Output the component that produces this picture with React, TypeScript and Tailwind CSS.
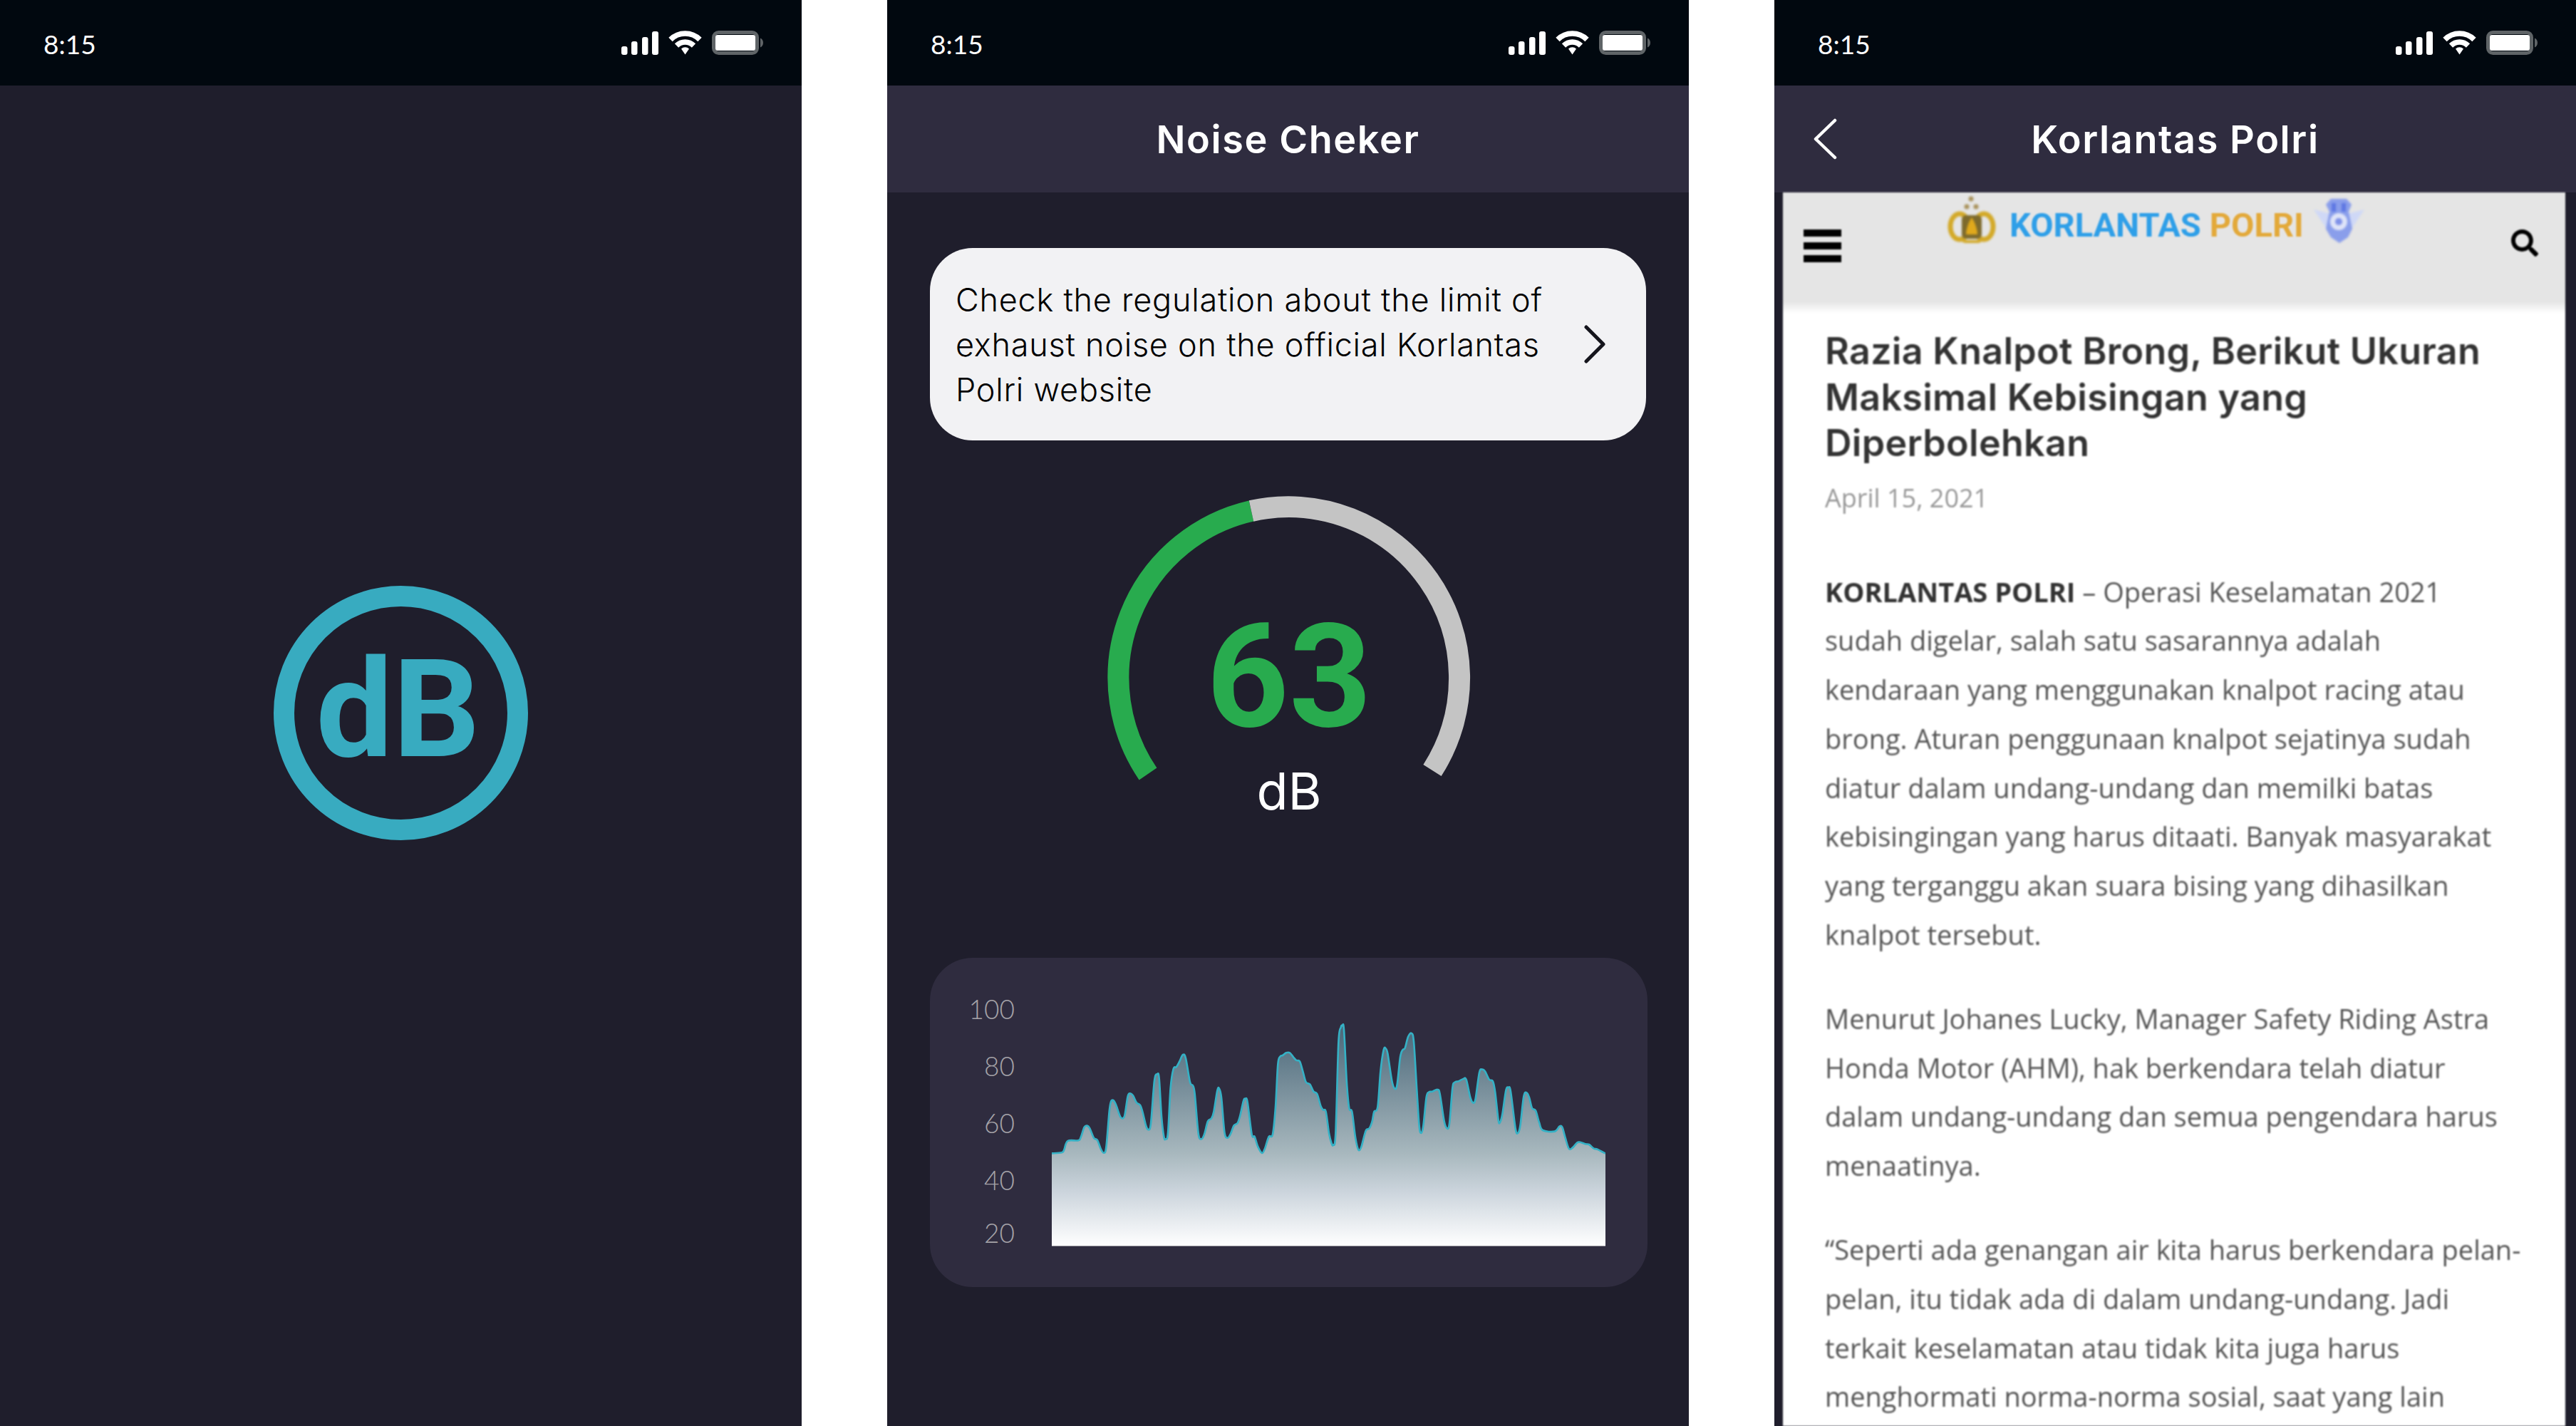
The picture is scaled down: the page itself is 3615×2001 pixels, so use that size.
import React from 'react'
import { FaSearch } from 'react-icons/fa'

type Pt = [number, number]

// traced from the chart, 3 units = 1 screen pixel
const wave: Pt[] = [
  [48,595],[90,592],[100,580],[115,543],[160,541],[170,528],[185,485],[197,479],[208,490],[225,530],[240,540],[255,578],[267,593],[277,570],[290,420],[297,378],[307,372],[318,390],[335,438],[345,448],[355,435],[368,355],[378,343],[390,352],[405,382],[420,392],[430,420],[445,480],[455,495],[465,470],[480,290],[492,262],[500,280],[510,440],[520,525],[527,535],[537,510],[548,320],[560,240],[572,232],[585,210],[600,180],[612,195],[630,295],[642,310],[650,345],[665,510],[677,535],[690,515],[705,460],[720,448],[730,420],[745,330],[753,323],[762,360],[775,505],[787,530],[800,515],[815,478],[830,468],[840,440],[855,375],[863,365],[872,380],[890,515],[902,525],[915,565],[933,594],[945,575],[962,525],[978,515],[990,400],[1000,220],[1010,187],[1020,183],[1035,172],[1050,172],[1065,190],[1078,204],[1092,208],[1105,250],[1118,295],[1135,305],[1150,335],[1165,345],[1180,395],[1190,412],[1202,420],
  [1215,510],[1225,550],[1233,560],[1243,510],[1255,130],[1265,65],[1271,58],[1278,75],[1290,300],[1300,405],[1312,420],[1325,520],[1335,570],[1343,582],[1352,565],[1370,500],[1385,490],[1397,460],[1405,420],[1420,400],[1432,250],[1445,160],[1453,153],[1462,175],[1480,290],[1492,323],[1502,305],[1515,190],[1525,160],[1535,152],[1548,105],[1562,90],[1572,125],[1585,330],[1595,480],[1603,510],[1612,480],[1625,360],[1635,338],[1650,335],[1672,327],[1682,345],[1700,460],[1712,490],[1722,470],[1735,320],[1745,296],[1760,292],[1780,282],[1793,285],[1810,360],[1822,382],[1832,365],[1848,255],[1860,242],[1872,250],[1890,285],[1905,292],[1915,340],[1928,455],[1935,465],[1945,430],[1960,330],[1970,318],[1980,335],[2000,490],[2010,510],[2020,480],[2035,355],[2047,340],[2058,360],[2070,405],[2085,415],[2100,465],[2115,498],[2165,503],[2185,482],[2197,485],[2210,530],[2225,575],[2240,572],[2260,550],[2275,549],[2295,556],[2310,558],[2330,575],[2345,578],[2379,596],
]

function smooth(pts: Pt[]) {
  let d = `M${pts[0][0]} ${pts[0][1]}`
  for (let i = 0; i < pts.length - 1; i++) {
    const p0 = pts[Math.max(i - 1, 0)]
    const p1 = pts[i]
    const p2 = pts[i + 1]
    const p3 = pts[Math.min(i + 2, pts.length - 1)]
    const c1x = p1[0] + (p2[0] - p0[0]) / 6
    const c1y = p1[1] + (p2[1] - p0[1]) / 6
    const c2x = p2[0] - (p3[0] - p1[0]) / 6
    const c2y = p2[1] - (p3[1] - p1[1]) / 6
    d += ` C${c1x} ${c1y} ${c2x} ${c2y} ${p2[0]} ${p2[1]}`
  }
  return d
}

function StatusBar() {
  return (
    <div className="h-[120px] shrink-0 bg-[#01080f] flex items-center justify-between pl-[61px] pr-[54px]">
      <span className="font-['Lato',sans-serif] text-[37px] leading-none text-white mt-[3px]">8:15</span>
      <div className="flex items-center gap-[14px]">
        <svg width="53" height="33" viewBox="0 0 53 33" fill="#fff">
          <rect x="1" y="21" width="8.5" height="12" rx="3" />
          <rect x="15" y="14" width="8.5" height="19" rx="3" />
          <rect x="30" y="8" width="8.5" height="25" rx="3" />
          <rect x="44" y="0" width="9" height="33" rx="3" />
        </svg>
        <svg width="47" height="34" viewBox="0 0 47 34" fill="none" stroke="#fff" strokeWidth="7.5">
          <path d="M3 12.5A29 29 0 0 1 44 12.5" />
          <path d="M11.5 21A17 17 0 0 1 35.5 21" />
          <path d="M18 25.5A8 8 0 0 1 29 25.5L23.5 33.5Z" fill="#fff" stroke="none" />
        </svg>
        <svg width="72" height="34" viewBox="0 0 72 34">
          <rect x="2.5" y="2.5" width="61" height="29" rx="7" fill="none" stroke="#5f6467" strokeWidth="5" />
          <rect x="5" y="6" width="56" height="22" rx="3" fill="#fff" />
          <path d="M68 10.5C70.5 11.5 72 14 72 17S70.5 22.500 68 23.500Z" fill="#5f6467" />
        </svg>
      </div>
    </div>
  )
}

function NavBar({ title, back }: { title: string; back?: boolean }) {
  return (
    <div className="relative h-[150px] shrink-0 bg-[#2f2c3f] flex items-center justify-center">
      {back && (
        <svg className="absolute left-[55px] top-[46px]" width="34" height="58" viewBox="0 0 34 58" fill="none" stroke="#fff" strokeWidth="4.5" strokeLinecap="round" strokeLinejoin="round">
          <path d="M30 3L3 29L30 55" />
        </svg>
      )}
      <span className="font-['Inter',sans-serif] font-semibold text-[54px] leading-none tracking-[1.6px] text-white mt-[2px]">{title}</span>
    </div>
  )
}

function SplashScreen() {
  return (
    <div className="w-[1125px] h-[2001px] flex flex-col bg-[#1f1e2c] overflow-hidden">
      <StatusBar />
      <div className="flex justify-center pt-[702px]">
        <div className="w-[357px] h-[357px] rounded-full border-[29px] border-[#38abc0] flex items-center justify-center">
          <span className="font-['Roboto',sans-serif] font-bold text-[192px] leading-none text-[#38abc0] mr-[8px] mt-[-10px]">dB</span>
        </div>
      </div>
    </div>
  )
}

function CheckerScreen() {
  const area = smooth(wave) + ' L2379 985 L48 985 Z'
  return (
    <div className="w-[1125px] h-[2001px] flex flex-col bg-[#1f1e2c] overflow-hidden">
      <StatusBar />
      <NavBar title="Noise Cheker" />
      <div className="pl-[60px] pt-[78px]">
        <div className="w-[1005px] h-[270px] rounded-[60px] bg-[#f2f2f4] flex items-center pl-[36px] pr-[57px] justify-between">
          <p className="font-['Inter',sans-serif] font-light text-[45px] leading-[63px] tracking-[0.75px] text-black whitespace-nowrap">
            Check the regulation about the limit of<br />
            exhaust noise on the official Korlantas<br />
            Polri website
          </p>
          <svg width="30" height="54" viewBox="0 0 30 54" fill="none" stroke="#15151c" strokeWidth="5" strokeLinecap="round" strokeLinejoin="round">
            <path d="M3 3L27 27L3 51" />
          </svg>
        </div>

        <div className="relative w-[510px] h-[648px] ml-[249px] mt-[78px]">
          <svg width="510" height="420" viewBox="0 0 510 420" fill="none" strokeWidth="30">
            <path d="M57 390A240 240 0 0 1 202 21" stroke="#28ab4e" />
            <path d="M202 21A240 240 0 0 1 456 385" stroke="#c4c4c4" />
          </svg>
          <div className="absolute left-0 right-0 top-[153px] text-center font-['Roboto',sans-serif] font-bold text-[202px] leading-none text-[#28ab4e]">63</div>
          <div className="absolute left-0 right-0 top-[378px] text-center font-['Inter',sans-serif] text-[72px] leading-none text-white">dB</div>
        </div>

        <div className="w-[1007px] h-[462px] rounded-[60px] bg-[#2f2c3f] flex items-start">
          <div className="w-[119px] pt-[32px] flex flex-col items-end font-['Lato',sans-serif] font-light text-[37px] leading-[80px] text-[#a5a3a8]">
            <span>100</span>
            <span>80</span>
            <span>60</span>
            <span>40</span>
            <span className="mt-[-6px]">20</span>
          </div>
          <svg className="ml-[52px] mt-[76px]" width="777" height="329" viewBox="48 0 2331 987">
            <defs>
              <linearGradient id="waveFill" gradientUnits="userSpaceOnUse" x1="0" y1="60" x2="0" y2="985">
                <stop offset="0" stopColor="#4a6779" />
                <stop offset="0.58" stopColor="#a8b8be" />
                <stop offset="0.75" stopColor="#cbd4dc" />
                <stop offset="1" stopColor="#ffffff" />
              </linearGradient>
            </defs>
            <path d={area} fill="url(#waveFill)" />
            <path d={smooth(wave)} fill="none" stroke="#35b1c5" strokeWidth="8" strokeLinejoin="round" />
            <rect x="48" y="984" width="2331" height="3" fill="#8b8992" />
          </svg>
        </div>
      </div>
    </div>
  )
}

function SiteLogo() {
  return (
    <div className="flex items-start mt-[5px]">
      <svg className="blur-[1px]" width="68" height="66" viewBox="0 0 68 66">
        <circle cx="33" cy="4" r="3.500" fill="#a8915a" />
        <circle cx="27" cy="15" r="3.500" fill="#a8915a" />
        <circle cx="40" cy="15" r="3.500" fill="#a8915a" />
        <ellipse cx="17" cy="43" rx="13" ry="18" fill="none" stroke="#d3a928" strokeWidth="7" />
        <ellipse cx="51" cy="43" rx="13" ry="18" fill="none" stroke="#d3a928" strokeWidth="7" />
        <rect x="20" y="27" width="28" height="33" rx="6" fill="#7d6a2c" />
        <path d="M34 30C38 36 42 46 42 54H26C26 46 30 36 34 30Z" fill="#e0a91c" />
        <path d="M16 62H52L44 66H24Z" fill="#d3a928" />
      </svg>
      <div className="ml-[19px] mt-[17px] font-['Roboto',sans-serif] font-bold text-[47px] leading-[47px] whitespace-nowrap">
        <span className="text-[#2f9fe8]">KORLANTAS</span>
        <span className="text-[#e3a93a] ml-[12px]">POLRI</span>
      </div>
      <svg className="ml-[14px] mt-[4px] blur-[1px]" width="71" height="62" viewBox="0 0 71 62">
        <path d="M0 15L28 22V42H18Z" fill="#cfd8f6" />
        <path d="M71 15L43 22V42H53Z" fill="#cfd8f6" />
        <path d="M24 0H46L53 8L49 18L54 42L48 54L36 62L24 54L17 42L22 18L17 8Z" fill="#8a9eeb" />
        <circle cx="35" cy="32" r="12" fill="#dfe4f8" />
        <circle cx="35" cy="32" r="5" fill="#7f91e8" />
        <rect x="25" y="6" width="6" height="12" fill="#5f78e3" />
        <rect x="39" y="6" width="6" height="12" fill="#5f78e3" />
      </svg>
    </div>
  )
}

function ArticleScreen() {
  return (
    <div className="w-[1125px] h-[2001px] flex flex-col bg-[#1f1e2c] overflow-hidden">
      <StatusBar />
      <NavBar title="Korlantas Polri" back />
      <div className="ml-[12px] mr-[15px] flex-1 bg-white overflow-hidden blur-[0.8px]">
        <div className="h-[170px] bg-[linear-gradient(#e5e5e5_0%,#e5e5e5_90%,#ffffff_100%)] flex items-start pl-[29px] pr-[38px]">
          <div className="w-[53px] mt-[52px] flex flex-col gap-[8px]">
            <div className="h-[10px] bg-black" />
            <div className="h-[10px] bg-black" />
            <div className="h-[10px] bg-black" />
          </div>
          <div className="ml-[149px]">
            <SiteLogo />
          </div>
          <FaSearch className="ml-auto mt-[52px] text-black" size={38} />
        </div>
        <div className="pl-[59px] pt-[21px] whitespace-nowrap">
          <h1 className="font-['Inter',sans-serif] font-semibold text-[52px] leading-[64.5px] tracking-[0.3px] text-[#333333]">
            Razia Knalpot Brong, Berikut Ukuran<br />
            Maksimal Kebisingan yang<br />
            Diperbolehkan
          </h1>
          <div className="mt-[19px] font-['Open_Sans',sans-serif] text-[36px] leading-[50px] text-[#999999]">April 15, 2021</div>
          <div className="mt-[72px] font-['Open_Sans',sans-serif] text-[38px] leading-[68.8px] text-[#555555]">
            <p>
              <b className="font-bold text-[#333333]">KORLANTAS POLRI</b> – Operasi Keselamatan 2021<br />
              sudah digelar, salah satu sasarannya adalah<br />
              kendaraan yang menggunakan knalpot racing atau<br />
              brong. Aturan penggunaan knalpot sejatinya sudah<br />
              diatur dalam undang-undang dan memilki batas<br />
              kebisingingan yang harus ditaati. Banyak masyarakat<br />
              yang terganggu akan suara bising yang dihasilkan<br />
              knalpot tersebut.
            </p>
            <p className="mt-[49px]">
              Menurut Johanes Lucky, Manager Safety Riding Astra<br />
              Honda Motor (AHM), hak berkendara telah diatur<br />
              dalam undang-undang dan semua pengendara harus<br />
              menaatinya.
            </p>
            <p className="mt-[49px]">
              “Seperti ada genangan air kita harus berkendara pelan-<br />
              pelan, itu tidak ada di dalam undang-undang. Jadi<br />
              terkait keselamatan atau tidak kita juga harus<br />
              menghormati norma-norma sosial, saat yang lain
            </p>
          </div>
        </div>
      </div>
    </div>
  )
}

export default function App() {
  return (
    <div className="w-[3615px] h-[2001px] bg-white flex gap-[120px] overflow-hidden">
      <SplashScreen />
      <CheckerScreen />
      <ArticleScreen />
    </div>
  )
}
